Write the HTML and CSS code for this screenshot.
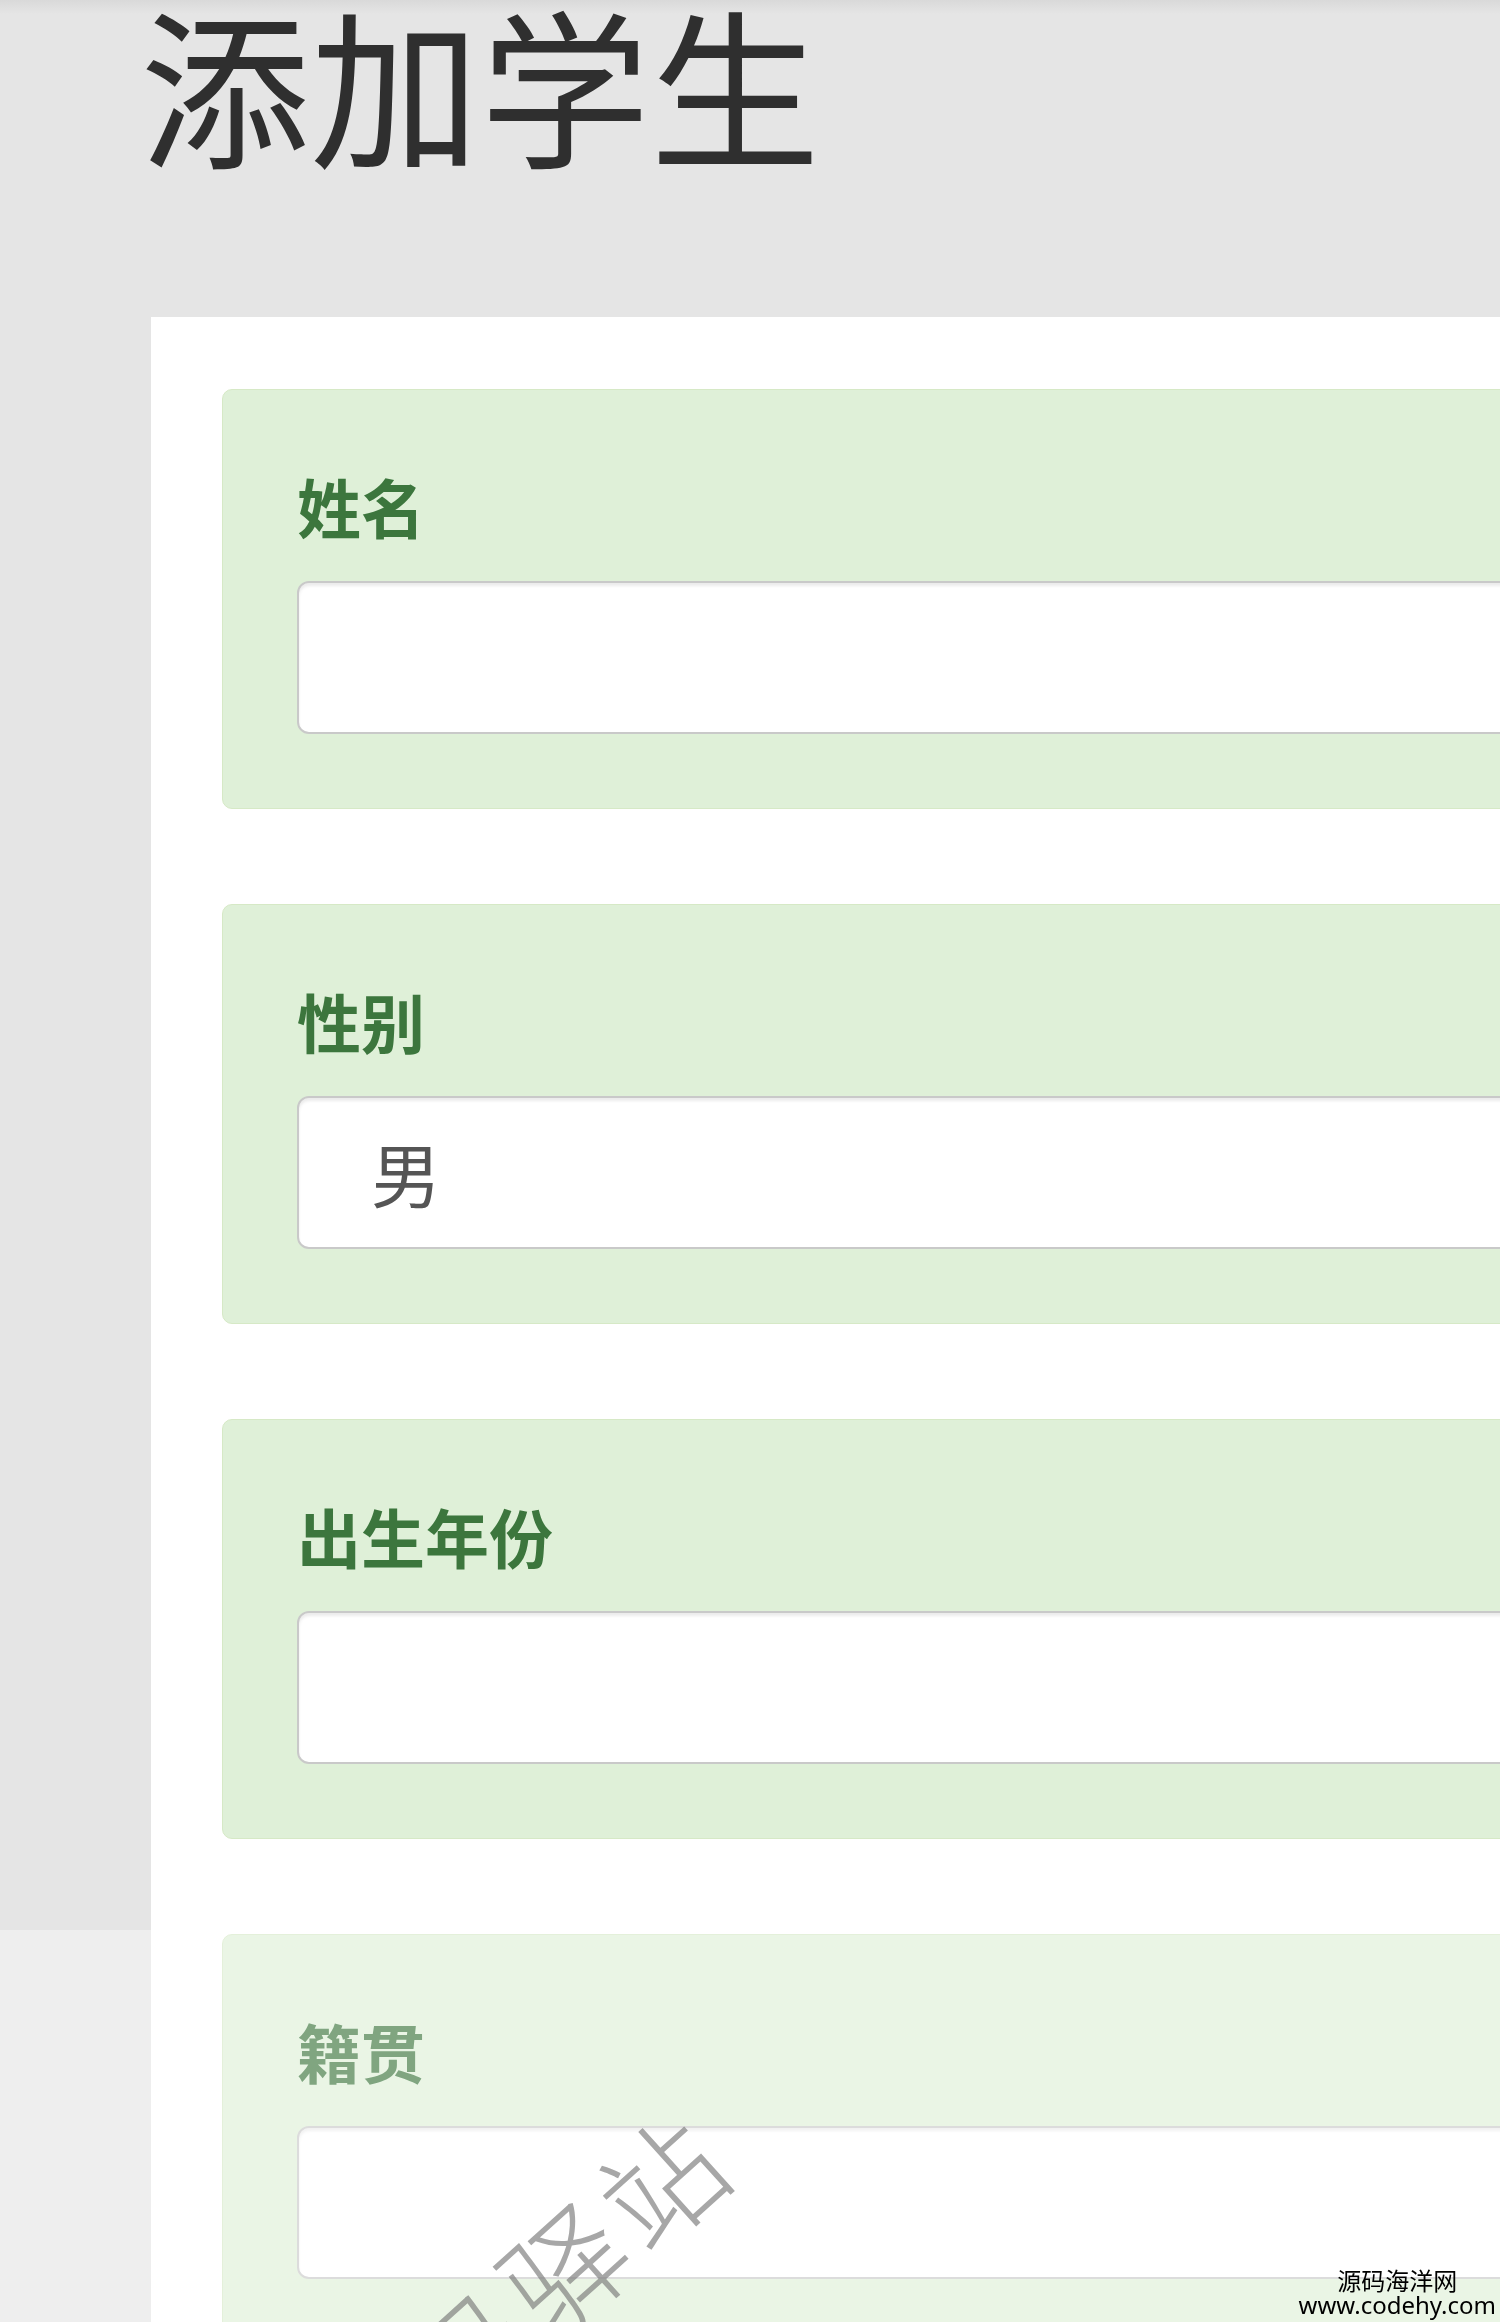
FILE: index.html
```html
<!DOCTYPE html>
<html lang="zh-CN">
  <head>
    <meta charset="utf-8" />
    <title>添加学生</title>
    <link rel="stylesheet" href="styles.css">
  </head>
  <body>
    <div class="page">
      <header class="page-header">
        <h1>添加学生</h1>
      </header>

      <main class="panel">
        <form>
          <div class="form-group">
            <label for="name">姓名</label>
            <input id="name" class="form-control" type="text">
          </div>
          <div class="form-group">
            <label for="sex">性别</label>
            <select id="sex" class="form-control">
              <option>男</option>
              <option>女</option>
            </select>
          </div>
          <div class="form-group">
            <label for="year">出生年份</label>
            <input id="year" class="form-control" type="text">
          </div>
          <div class="form-group">
            <label for="place">籍贯</label>
            <input id="place" class="form-control" type="text">
          </div>
        </form>
      </main>
    </div>

    <!-- lower part of the capture is washed out -->
    <div class="fade"></div>
    <div class="watermark">源码驿站</div>
    <div class="site-mark">
      <div>源码海洋网</div>
      <div>www.codehy.com</div>
    </div>
  </body>
</html>
```

FILE: styles.css
```css
html, body {
  height: 100%;
}
body {
  margin: 0;
  overflow: hidden;
  background: #e5e5e5;
  font-family: 'Noto Sans', 'Noto Sans CJK SC', sans-serif;
  color: #333;
}

.page {
  width: 1700px;
}

.page-header {
  height: 317px;
  padding-left: 140px;
  background: linear-gradient(#d9d9d9, #e5e5e5 14px);
  box-sizing: border-box;
}
.page-header h1 {
  margin: 0;
  font-size: 170px;
  font-weight: 400;
  line-height: 180px;
  color: #2f2f2f;
}

.panel {
  margin-left: 151px;
  padding: 72px 0 200px 71px;
  background: #fff;
}

.form-group {
  margin-bottom: 95px;
  padding: 71px 0 74px 74px;
  background: #dff0d8;
  border: 1px solid #d6e9c6;
  border-radius: 10px;
}
.form-group label {
  display: block;
  margin-bottom: 24px;
  font-size: 64px;
  font-weight: 700;
  line-height: 96px;
  color: #3c763d;
}

.form-control {
  display: block;
  box-sizing: border-box;
  width: 100%;
  height: 153px;
  padding: 0 72px;
  font-family: 'Noto Sans CJK SC', sans-serif;
  font-size: 70px;
  color: #555;
  background: #fff;
  border: 2px solid #c9c9c9;
  border-radius: 12px;
  box-shadow: inset 0 3px 3px rgba(0, 0, 0, .08);
  -webkit-appearance: none;
  appearance: none;
  outline: none;
}

.fade {
  position: fixed;
  left: 0;
  right: 0;
  top: 1930px;
  bottom: 0;
  background: rgba(255, 255, 255, .35);
}

.watermark {
  position: fixed;
  left: 190px;
  top: 2072px;
  transform: rotate(-42deg);
  transform-origin: right center;
  font-family: 'Noto Sans CJK SC', sans-serif;
  font-size: 120px;
  font-weight: 300;
  line-height: 120px;
  letter-spacing: 10px;
  color: rgba(120, 120, 120, .65);
  white-space: nowrap;
}

.site-mark {
  position: fixed;
  right: 4px;
  bottom: 5px;
  font-family: 'Noto Sans', 'Noto Sans CJK SC', sans-serif;
  font-size: 24px;
  line-height: 24px;
  text-align: center;
  color: #000;
}
```
